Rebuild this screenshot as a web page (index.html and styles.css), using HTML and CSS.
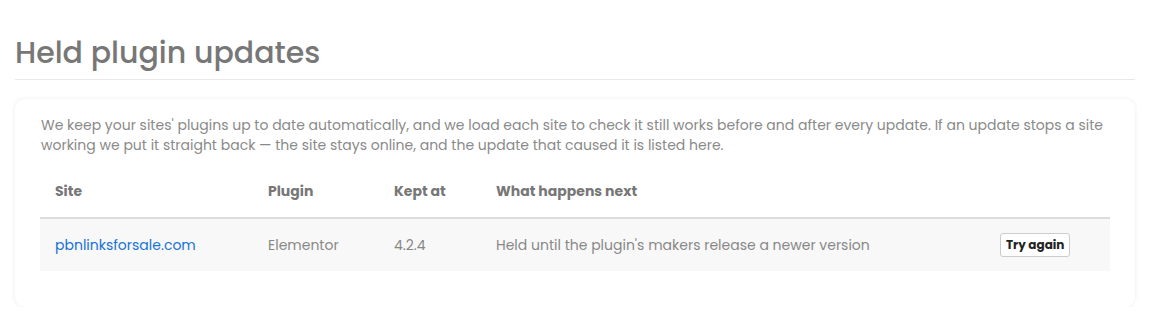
FILE: index.html
```html
<!DOCTYPE html>
<html lang="en">
<head>
  <meta charset="UTF-8">
  <title>Held plugin updates</title>
  <link rel="stylesheet" href="styles.css">
</head>
<body>
  <main>
    <h1>Held plugin updates</h1>
    <section class="card">
      <p class="intro">We keep your sites' plugins up to date automatically, and we load each site to check it still works before and after every update. If an update stops a site working we put it straight back — the site stays online, and the update that caused it is listed here.</p>
      <table class="held">
        <thead>
          <tr>
            <th class="col-site">Site</th>
            <th class="col-plugin">Plugin</th>
            <th class="col-version">Kept at</th>
            <th>What happens next</th>
            <th class="col-action"></th>
          </tr>
        </thead>
        <tbody>
          <tr>
            <td><a href="#">pbnlinksforsale.com</a></td>
            <td>Elementor</td>
            <td>4.2.4</td>
            <td>Held until the plugin's makers release a newer version</td>
            <td><button class="retry">Try again</button></td>
          </tr>
        </tbody>
      </table>
    </section>
  </main>
</body>
</html>
```

FILE: styles.css
```css
body {
  font-family: 'Poppins', 'Inter', sans-serif;
  background: #fff;
  margin: 0;
  padding: 0;
  color: #888;
}
main {
  padding: 27px 25px 0 15px;
}
h1 {
  margin: 0 0 19px;
  padding: 3px 0 4px;
  font-size: 30px;
  line-height: 45px;
  font-weight: 500;
  color: #777;
  border-bottom: 1px solid #e8e8e8;
}
.card {
  background: #fff;
  border-radius: 10px;
  box-shadow: 0 0 5px rgba(0,0,0,0.08);
  padding: 16px 25px 36px 25px;
}
.intro {
  margin: 0 0 12px 1px;
  font-size: 14px;
  line-height: 20px;
  color: #8a8a8a;
}
.held {
  width: 100%;
  border-collapse: collapse;
  font-size: 14px;
}
.held th {
  text-align: left;
  font-weight: 700;
  color: #777;
  padding: 14px 15px 15px;
  border-bottom: 2px solid #ddd;
}
.held td {
  background: #f8f8f8;
  padding: 14px 15px;
  color: #888;
}
.col-site { width: 183px; }
.col-plugin { width: 96px; }
.col-version { width: 72px; }
.col-action { width: 95px; }
.held a {
  color: #1673d8;
  text-decoration: none;
}
.retry {
  font-family: inherit;
  font-size: 12px;
  font-weight: 700;
  color: #222;
  background: #fff;
  border: 1px solid #ccc;
  border-radius: 3px;
  padding: 2px 5px;
  cursor: pointer;
}
```
